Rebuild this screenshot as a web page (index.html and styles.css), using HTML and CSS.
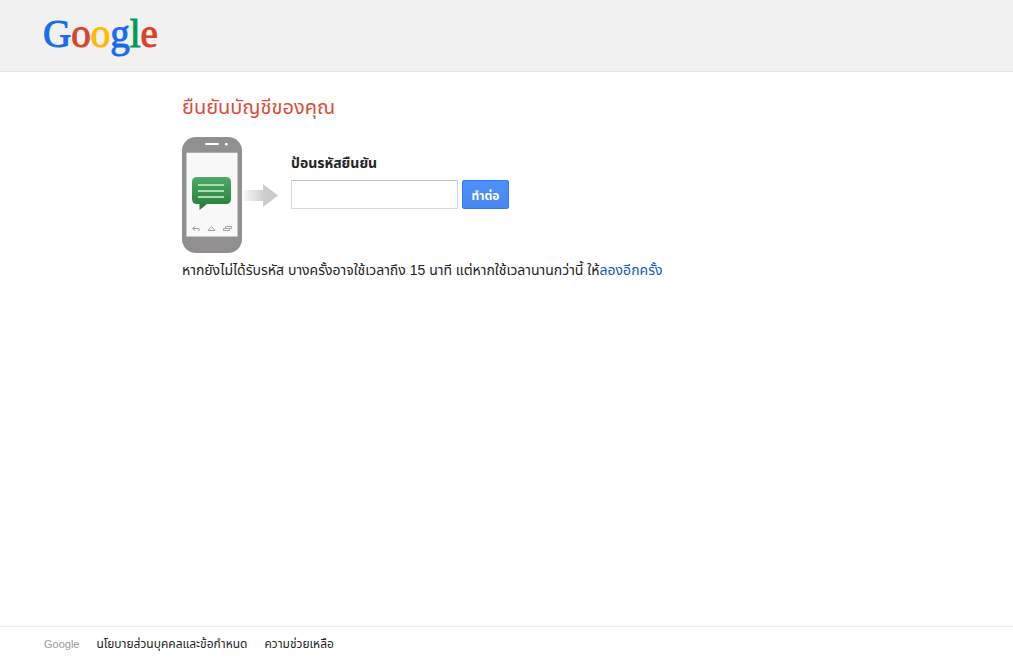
FILE: index.html
```html
<!DOCTYPE html>
<html lang="th">
<head>
<meta charset="utf-8">
<meta name="viewport" content="width=device-width, initial-scale=1">
<title>ยืนยันบัญชีของคุณ</title>
<link rel="stylesheet" href="styles.css">
</head>
<body>
<header class="header">
  <div class="logo"><span class="blue">G</span><span class="red">o</span><span class="yellow">o</span><span class="blue">g</span><span class="green">l</span><span class="red">e</span></div>
</header>
<main class="content">
  <h1 class="title">ยืนยันบัญชีของคุณ</h1>
  <div class="verify">
    <svg class="phone" width="97" height="116" viewBox="0 0 97 116" aria-hidden="true">
      <defs>
        <linearGradient id="bubble" x1="0" y1="0" x2="0" y2="1"><stop offset="0" stop-color="#4fa967"/><stop offset="1" stop-color="#237b38"/></linearGradient>
        <linearGradient id="arrow" x1="0" y1="0" x2="1" y2="0"><stop offset="0" stop-color="#f8f8f8"/><stop offset=".65" stop-color="#cbcbcb"/><stop offset="1" stop-color="#cbcbcb"/></linearGradient>
      </defs>
      <rect width="60" height="116" rx="14" fill="#918f8f"/>
      <rect x="4" y="15.500" width="52" height="84.500" rx="1" fill="#c9c8c8"/>
      <rect x="5" y="16" width="50" height="83" fill="#f8f8f8"/>
      <rect x="23" y="6" width="14" height="2" rx="1" fill="#fff"/>
      <circle cx="44.300" cy="7.200" r="1.400" fill="#fff"/>
      <path d="M15 40h29q5 0 5 5v17q0 5-5 5H25l-7.500 6V67H15q-5 0-5-5V45q0-5 5-5z" fill="url(#bubble)"/>
      <path d="M16 48h26M16 54h26M16 60h26" stroke="#a6dfaf" stroke-width="2"/>
      <path d="M13 89.500 10.500 91.500 13 93.500M10.500 91.500H16q1.500 0 1.500 1t-1.500 1M26 93.500h7L29.500 89.500zM41.500 91.500h6v2h-6zM43.500 91.500v-2h6v2h-2" fill="none" stroke="#a3a3a3"/>
      <path d="M61 53h20v-6l15 11.500L81 70v-6H61z" fill="url(#arrow)"/>
    </svg>
    <form class="form">
      <label class="label" for="code">ป้อนรหัสยืนยัน</label>
      <div class="row">
        <input class="code" id="code" type="text">
        <button class="submit" type="submit">ทำต่อ</button>
      </div>
    </form>
  </div>
  <p class="hint">หากยังไม่ได้รับรหัส บางครั้งอาจใช้เวลาถึง 15 นาที แต่หากใช้เวลานานกว่านี้ ให้<a href="#">ลองอีกครั้ง</a></p>
</main>
<footer class="footer">
  <span class="brand">Google</span>
  <a href="#">นโยบายส่วนบุคคลและข้อกำหนด</a>
  <a href="#">ความช่วยเหลือ</a>
</footer>
</body>
</html>
```

FILE: styles.css
```css
* { box-sizing: border-box; }
body {
  margin: 0;
  min-height: 100vh;
  display: flex;
  flex-direction: column;
  background: #fff;
  color: #222;
  font: 14px/18px "Liberation Sans", "Noto Sans Thai", sans-serif;
}
a { text-decoration: none; }
.header {
  padding: 12px 43px 15px;
  background: #f1f1f1;
  border-bottom: 1px solid #e5e5e5;
}
.logo {
  font: 39px/44px "Liberation Serif", serif;
  -webkit-text-stroke: 1px currentColor;
}
.blue { color: #176dee; }
.red { color: #d8432e; }
.yellow { color: #ffb803; }
.green { color: #009a57; }
.content {
  flex: 1;
  padding: 23px 44px 23px 182px;
}
.title {
  margin: 0 0 18px;
  color: #dd4b39;
  font-size: 20px;
  line-height: 24px;
  font-weight: 400;
}
.verify { display: flex; gap: 12px; }
.phone { flex: none; }
.form { padding-top: 17px; }
.label {
  display: block;
  margin-bottom: 8px;
  font-weight: 700;
}
.row { display: flex; gap: 4px; }
.code {
  width: 167px;
  height: 29px;
  padding: 0 8px;
  border: 1px solid #d9d9d9;
  border-top-color: #c0c0c0;
  font: inherit;
}
.submit {
  height: 29px;
  min-width: 47px;
  padding: 2px 8px 0;
  border: 1px solid #3079ed;
  border-radius: 2px;
  background: linear-gradient(#4d90fe, #4787ed);
  color: #fff;
  font: 700 12px/24px "Liberation Sans", "Noto Sans Thai", sans-serif;
}
.hint { margin: 8px 0 0; }
.hint a { color: #15c; }
.footer {
  display: flex;
  gap: 17px;
  padding: 8px 44px 9px;
  border-top: 1px solid #ebebeb;
  font-size: 12px;
}
.footer a { color: #222; }
.brand {
  color: #999;
  font-size: 11px;
}
```
